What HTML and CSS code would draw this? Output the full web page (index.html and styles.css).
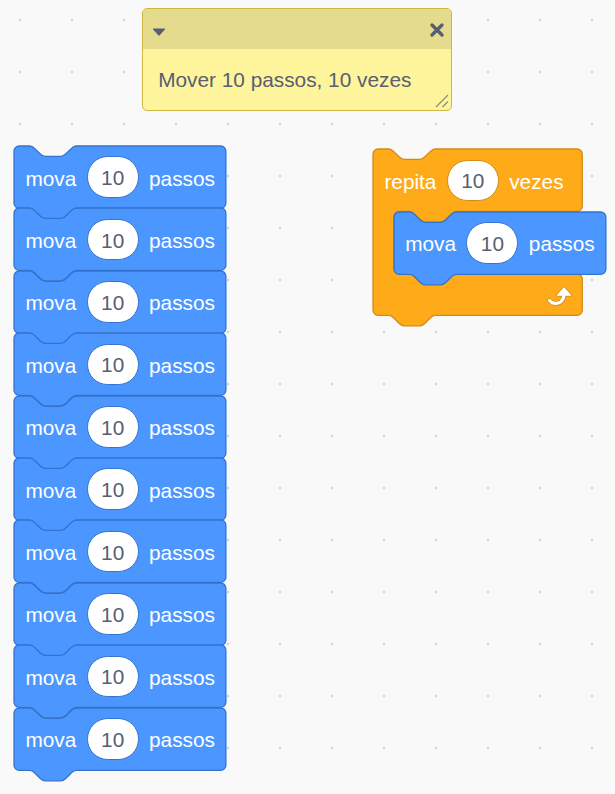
FILE: index.html
```html
<!DOCTYPE html>
<html lang="pt">
<head>
<meta charset="utf-8">
<title>Scratch workspace</title>
<link rel="stylesheet" href="styles.css">
</head>
<body>
<main class="workspace">

  <div class="comment">
    <div class="comment-top">
      <svg class="comment-arrow" viewBox="0 0 14 8" width="14" height="8"><path d="M1.5 1 H12.5 L7 7 Z"/></svg>
      <svg class="comment-close" viewBox="0 0 16 16" width="16" height="16"><path d="M3 3 L13 13 M13 3 L3 13"/></svg>
    </div>
    <div class="comment-body">Mover 10 passos, 10 vezes</div>
    <svg class="comment-resize" viewBox="0 0 14 14" width="14" height="14"><path d="M1 13 L13 1 M7.5 13 L13 7.5"/></svg>
  </div>

  <div class="stack">
    <div class="block"><svg class="shape" viewBox="0 0 163 48" width="211.9" height="62.4"><path class="blue" d="M0,4 A4,4 0 0,1 4,0 H12 c2,0 3,1 4,2 l4,4 c1,1 2,2 4,2 h12 c2,0 3,-1 4,-2 l4,-4 c1,-1 2,-2 4,-2 H159 a4,4 0 0,1 4,4 V44 a4,4 0 0,1 -4,4 H48 c-2,0 -3,1 -4,2 l-4,4 c-1,1 -2,2 -4,2 h-12 c-2,0 -3,-1 -4,-2 l-4,-4 c-1,-1 -2,-2 -4,-2 H4 a4,4 0 0,1 -4,-4 Z"/></svg><div class="row"><span class="label">mova</span><span class="pill pill-blue">10</span><span class="label">passos</span></div></div>
    <div class="block"><svg class="shape" viewBox="0 0 163 48" width="211.9" height="62.4"><path class="blue" d="M0,4 A4,4 0 0,1 4,0 H12 c2,0 3,1 4,2 l4,4 c1,1 2,2 4,2 h12 c2,0 3,-1 4,-2 l4,-4 c1,-1 2,-2 4,-2 H159 a4,4 0 0,1 4,4 V44 a4,4 0 0,1 -4,4 H48 c-2,0 -3,1 -4,2 l-4,4 c-1,1 -2,2 -4,2 h-12 c-2,0 -3,-1 -4,-2 l-4,-4 c-1,-1 -2,-2 -4,-2 H4 a4,4 0 0,1 -4,-4 Z"/></svg><div class="row"><span class="label">mova</span><span class="pill pill-blue">10</span><span class="label">passos</span></div></div>
    <div class="block"><svg class="shape" viewBox="0 0 163 48" width="211.9" height="62.4"><path class="blue" d="M0,4 A4,4 0 0,1 4,0 H12 c2,0 3,1 4,2 l4,4 c1,1 2,2 4,2 h12 c2,0 3,-1 4,-2 l4,-4 c1,-1 2,-2 4,-2 H159 a4,4 0 0,1 4,4 V44 a4,4 0 0,1 -4,4 H48 c-2,0 -3,1 -4,2 l-4,4 c-1,1 -2,2 -4,2 h-12 c-2,0 -3,-1 -4,-2 l-4,-4 c-1,-1 -2,-2 -4,-2 H4 a4,4 0 0,1 -4,-4 Z"/></svg><div class="row"><span class="label">mova</span><span class="pill pill-blue">10</span><span class="label">passos</span></div></div>
    <div class="block"><svg class="shape" viewBox="0 0 163 48" width="211.9" height="62.4"><path class="blue" d="M0,4 A4,4 0 0,1 4,0 H12 c2,0 3,1 4,2 l4,4 c1,1 2,2 4,2 h12 c2,0 3,-1 4,-2 l4,-4 c1,-1 2,-2 4,-2 H159 a4,4 0 0,1 4,4 V44 a4,4 0 0,1 -4,4 H48 c-2,0 -3,1 -4,2 l-4,4 c-1,1 -2,2 -4,2 h-12 c-2,0 -3,-1 -4,-2 l-4,-4 c-1,-1 -2,-2 -4,-2 H4 a4,4 0 0,1 -4,-4 Z"/></svg><div class="row"><span class="label">mova</span><span class="pill pill-blue">10</span><span class="label">passos</span></div></div>
    <div class="block"><svg class="shape" viewBox="0 0 163 48" width="211.9" height="62.4"><path class="blue" d="M0,4 A4,4 0 0,1 4,0 H12 c2,0 3,1 4,2 l4,4 c1,1 2,2 4,2 h12 c2,0 3,-1 4,-2 l4,-4 c1,-1 2,-2 4,-2 H159 a4,4 0 0,1 4,4 V44 a4,4 0 0,1 -4,4 H48 c-2,0 -3,1 -4,2 l-4,4 c-1,1 -2,2 -4,2 h-12 c-2,0 -3,-1 -4,-2 l-4,-4 c-1,-1 -2,-2 -4,-2 H4 a4,4 0 0,1 -4,-4 Z"/></svg><div class="row"><span class="label">mova</span><span class="pill pill-blue">10</span><span class="label">passos</span></div></div>
    <div class="block"><svg class="shape" viewBox="0 0 163 48" width="211.9" height="62.4"><path class="blue" d="M0,4 A4,4 0 0,1 4,0 H12 c2,0 3,1 4,2 l4,4 c1,1 2,2 4,2 h12 c2,0 3,-1 4,-2 l4,-4 c1,-1 2,-2 4,-2 H159 a4,4 0 0,1 4,4 V44 a4,4 0 0,1 -4,4 H48 c-2,0 -3,1 -4,2 l-4,4 c-1,1 -2,2 -4,2 h-12 c-2,0 -3,-1 -4,-2 l-4,-4 c-1,-1 -2,-2 -4,-2 H4 a4,4 0 0,1 -4,-4 Z"/></svg><div class="row"><span class="label">mova</span><span class="pill pill-blue">10</span><span class="label">passos</span></div></div>
    <div class="block"><svg class="shape" viewBox="0 0 163 48" width="211.9" height="62.4"><path class="blue" d="M0,4 A4,4 0 0,1 4,0 H12 c2,0 3,1 4,2 l4,4 c1,1 2,2 4,2 h12 c2,0 3,-1 4,-2 l4,-4 c1,-1 2,-2 4,-2 H159 a4,4 0 0,1 4,4 V44 a4,4 0 0,1 -4,4 H48 c-2,0 -3,1 -4,2 l-4,4 c-1,1 -2,2 -4,2 h-12 c-2,0 -3,-1 -4,-2 l-4,-4 c-1,-1 -2,-2 -4,-2 H4 a4,4 0 0,1 -4,-4 Z"/></svg><div class="row"><span class="label">mova</span><span class="pill pill-blue">10</span><span class="label">passos</span></div></div>
    <div class="block"><svg class="shape" viewBox="0 0 163 48" width="211.9" height="62.4"><path class="blue" d="M0,4 A4,4 0 0,1 4,0 H12 c2,0 3,1 4,2 l4,4 c1,1 2,2 4,2 h12 c2,0 3,-1 4,-2 l4,-4 c1,-1 2,-2 4,-2 H159 a4,4 0 0,1 4,4 V44 a4,4 0 0,1 -4,4 H48 c-2,0 -3,1 -4,2 l-4,4 c-1,1 -2,2 -4,2 h-12 c-2,0 -3,-1 -4,-2 l-4,-4 c-1,-1 -2,-2 -4,-2 H4 a4,4 0 0,1 -4,-4 Z"/></svg><div class="row"><span class="label">mova</span><span class="pill pill-blue">10</span><span class="label">passos</span></div></div>
    <div class="block"><svg class="shape" viewBox="0 0 163 48" width="211.9" height="62.4"><path class="blue" d="M0,4 A4,4 0 0,1 4,0 H12 c2,0 3,1 4,2 l4,4 c1,1 2,2 4,2 h12 c2,0 3,-1 4,-2 l4,-4 c1,-1 2,-2 4,-2 H159 a4,4 0 0,1 4,4 V44 a4,4 0 0,1 -4,4 H48 c-2,0 -3,1 -4,2 l-4,4 c-1,1 -2,2 -4,2 h-12 c-2,0 -3,-1 -4,-2 l-4,-4 c-1,-1 -2,-2 -4,-2 H4 a4,4 0 0,1 -4,-4 Z"/></svg><div class="row"><span class="label">mova</span><span class="pill pill-blue">10</span><span class="label">passos</span></div></div>
    <div class="block"><svg class="shape" viewBox="0 0 163 48" width="211.9" height="62.4"><path class="blue" d="M0,4 A4,4 0 0,1 4,0 H12 c2,0 3,1 4,2 l4,4 c1,1 2,2 4,2 h12 c2,0 3,-1 4,-2 l4,-4 c1,-1 2,-2 4,-2 H159 a4,4 0 0,1 4,4 V44 a4,4 0 0,1 -4,4 H48 c-2,0 -3,1 -4,2 l-4,4 c-1,1 -2,2 -4,2 h-12 c-2,0 -3,-1 -4,-2 l-4,-4 c-1,-1 -2,-2 -4,-2 H4 a4,4 0 0,1 -4,-4 Z"/></svg><div class="row"><span class="label">mova</span><span class="pill pill-blue">10</span><span class="label">passos</span></div></div>
  </div>

  <div class="cblock">
    <svg class="shape" viewBox="0 0 161 128" width="209.3" height="166.4"><path class="orange" d="M0,4 A4,4 0 0,1 4,0 H12 c2,0 3,1 4,2 l4,4 c1,1 2,2 4,2 h12 c2,0 3,-1 4,-2 l4,-4 c1,-1 2,-2 4,-2 H157 a4,4 0 0,1 4,4 V44 a4,4 0 0,1 -4,4 H64 c-2,0 -3,1 -4,2 l-4,4 c-1,1 -2,2 -4,2 h-12 c-2,0 -3,-1 -4,-2 l-4,-4 c-1,-1 -2,-2 -4,-2 H20 a4,4 0 0,0 -4,4 V92 a4,4 0 0,0 4,4 H28 c2,0 3,1 4,2 l4,4 c1,1 2,2 4,2 h12 c2,0 3,-1 4,-2 l4,-4 c1,-1 2,-2 4,-2 H157 a4,4 0 0,1 4,4 V124 a4,4 0 0,1 -4,4 H48 c-2,0 -3,1 -4,2 l-4,4 c-1,1 -2,2 -4,2 h-12 c-2,0 -3,-1 -4,-2 l-4,-4 c-1,-1 -2,-2 -4,-2 H4 a4,4 0 0,1 -4,-4 Z"/></svg>
    <div class="row"><span class="label">repita</span><span class="pill pill-orange">10</span><span class="label">vezes</span></div>
    <div class="slot">
      <div class="block"><svg class="shape" viewBox="0 0 163 48" width="211.9" height="62.4"><path class="blue" d="M0,4 A4,4 0 0,1 4,0 H12 c2,0 3,1 4,2 l4,4 c1,1 2,2 4,2 h12 c2,0 3,-1 4,-2 l4,-4 c1,-1 2,-2 4,-2 H159 a4,4 0 0,1 4,4 V44 a4,4 0 0,1 -4,4 H48 c-2,0 -3,1 -4,2 l-4,4 c-1,1 -2,2 -4,2 h-12 c-2,0 -3,-1 -4,-2 l-4,-4 c-1,-1 -2,-2 -4,-2 H4 a4,4 0 0,1 -4,-4 Z"/></svg><div class="row"><span class="label">mova</span><span class="pill pill-blue">10</span><span class="label">passos</span></div></div>
    </div>
    <div class="arm-bottom">
      <svg class="loop-icon" viewBox="0 0 24 20" width="24" height="20">
        <path class="loop-shadow" d="M2.5 13.5 C5 16.5 10 17.5 13.5 15 C16 13 17 10.5 17 7.5"/>
        <path class="loop-head-shadow" d="M10.5 8.2 L17 1 L23.5 8.2 Z"/>
        <path class="loop-shaft" d="M2.5 13.5 C5 16.5 10 17.5 13.5 15 C16 13 17 10.5 17 7.5"/>
        <path class="loop-head" d="M10.5 8.2 L17 1 L23.5 8.2 Z"/>
      </svg>
    </div>
  </div>

</main>
</body>
</html>
```
FILE: styles.css
```css
html, body {
  margin: 0;
  padding: 0;
  height: 100%;
}

body {
  background-color: #F9F9F9;
  background-image: radial-gradient(circle at center, #d4d4d4 0, #d4d4d4 1px, rgba(212,212,212,0) 1.7px);
  background-size: 52px 52px;
  background-position: -6px -6px;
  font-family: "Liberation Sans", Arial, Helvetica, sans-serif;
  overflow: hidden;
}

.workspace {
  position: relative;
  width: 615px;
  height: 794px;
}

/* ---------- comment ---------- */
.comment {
  position: absolute;
  left: 141.7px;
  top: 8.3px;
  width: 310.6px;
  height: 102.7px;
  box-sizing: border-box;
  border: 1.5px solid #CDB845;
  border-radius: 5px;
  background: #FEF49C;
  overflow: hidden;
}

.comment-top {
  height: 40.2px;
  background: #E4DB8C;
  display: flex;
  justify-content: space-between;
  align-items: flex-start;
  padding: 0 5.8px 0 9px;
}

.comment-arrow {
  margin-top: 19px;
  fill: #575E75;
  stroke: #575E75;
  stroke-width: 1.2;
  stroke-linejoin: round;
}

.comment-close {
  margin-top: 13px;
  stroke: #575E75;
  stroke-width: 3.4;
  stroke-linecap: round;
  fill: none;
}

.comment-body {
  padding: 18.5px 0 0 15.5px;
  font-size: 20.8px;
  line-height: 24px;
  color: #575E75;
}

.comment-resize {
  position: absolute;
  right: 2px;
  bottom: 2px;
  stroke: #8E8D7B;
  stroke-width: 1.3;
  fill: none;
}

/* ---------- blocks ---------- */
.stack {
  position: absolute;
  left: 14px;
  top: 146px;
  display: flex;
  flex-direction: column;
}

.block {
  position: relative;
  width: 211.9px;
  height: 62.4px;
}

.shape {
  position: absolute;
  left: 0;
  top: 0;
  overflow: visible;
}

.blue {
  fill: #4C97FF;
  stroke: #3373CC;
  stroke-width: 1;
}

.orange {
  fill: #FFAB19;
  stroke: #CF8B17;
  stroke-width: 1;
}

.row {
  position: relative;
  height: 62.4px;
  display: flex;
  align-items: center;
  gap: 10.4px;
  padding-left: 11.4px;
  color: #FFFFFF;
  font-size: 20.8px;
  line-height: 24px;
  white-space: nowrap;
}

.label {
  padding-top: 3px;
}

.pill {
  width: 52px;
  height: 41.6px;
  box-sizing: border-box;
  border-radius: 20.8px;
  background: #FFFFFF;
  color: #575E75;
  display: flex;
  align-items: center;
  justify-content: center;
  padding-top: 2px;
}

.pill-blue {
  border: 1px solid #3373CC;
}

.pill-orange {
  border: 1px solid #CF8B17;
}

.cblock {
  position: absolute;
  left: 373px;
  top: 149.3px;
  width: 209.3px;
  display: flex;
  flex-direction: column;
}

.slot {
  position: relative;
  padding-left: 20.8px;
  height: 62.4px;
}

.arm-bottom {
  position: relative;
  height: 41.6px;
  display: flex;
  justify-content: flex-end;
  align-items: center;
  padding-right: 11.5px;
}

.loop-icon {
  margin-top: 4px;
  overflow: visible;
}

.loop-shadow {
  fill: none;
  stroke: #CF8B17;
  stroke-width: 4.8;
  stroke-linecap: round;
}

.loop-head-shadow {
  fill: #CF8B17;
  stroke: #CF8B17;
  stroke-width: 2.8;
  stroke-linejoin: round;
}

.loop-shaft {
  fill: none;
  stroke: #FFFFFF;
  stroke-width: 3.2;
  stroke-linecap: round;
}

.loop-head {
  fill: #FFFFFF;
  stroke: #FFFFFF;
  stroke-width: 1.2;
  stroke-linejoin: round;
}
```
